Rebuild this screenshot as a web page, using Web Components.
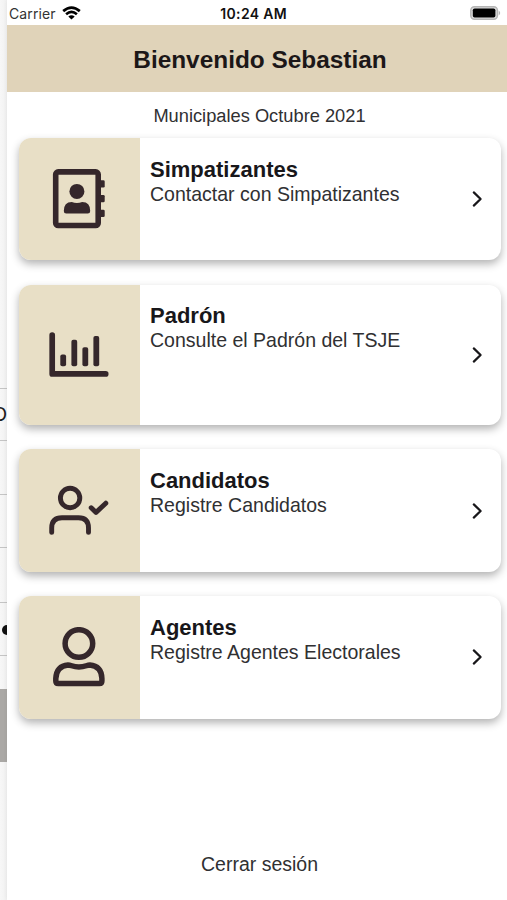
<!DOCTYPE html>
<html lang="es">
<head>
<meta charset="utf-8">
<title>Bienvenido</title>
<style>
html,body{margin:0;height:900px;overflow:hidden;background:#fff;color:#1c1b1d;font-family:"Liberation Sans",Arial,sans-serif}
</style>
</head>
<body>
<app-shell></app-shell>
<script>
function define(name, html) {
  const template = document.createElement('template');
  template.innerHTML = html;
  customElements.define(name, class extends HTMLElement {
    constructor() {
      super();
      this.attachShadow({mode: 'open'}).append(template.content.cloneNode(true));
    }
  });
}

define('previous-screen', `
<style>
:host{display:flex;flex-direction:column;height:900px;overflow:hidden;background:linear-gradient(90deg,#f7f7f7,#f1f1f1)}
.top{height:387.5px}
.row{box-sizing:border-box;border-top:1.5px solid #c4c4c4;display:flex;align-items:center;overflow:hidden}
.letter{justify-content:flex-end;font-size:19.6px;line-height:22px}
.dot{flex:none;width:10px;height:10px;border-radius:50%;background:#111;margin:2px 0 0 1.5px}
.button{height:73.5px;background:#aaa8a5}
</style>
<div class="top"></div>
<div class="row letter" style="height:52px">O</div>
<div class="row" style="height:54.5px"></div>
<div class="row" style="height:53px"></div>
<div class="row" style="height:54.5px"></div>
<div class="row" style="height:53.5px"><span class="dot"></span></div>
<div class="row" style="height:33.5px"></div>
<div class="button"></div>`);

define('status-bar', `
<style>
:host{display:grid;grid-template-columns:1fr auto 1fr;align-items:center;height:25.4px;box-sizing:border-box;padding:2px 6px 0 2px;font-family:Inter,sans-serif;font-size:14px;color:#111}
.left{display:flex;align-items:center;gap:6px;color:#333}
.carrier{letter-spacing:.1px}
.time{font-weight:600;font-size:14px;color:#111;letter-spacing:.35px;transform:translateX(-1.3px)}
.right{display:flex;justify-content:flex-end}
svg{display:block;margin-top:-1px}
</style>
<div class="left"><span class="carrier">Carrier</span>
<svg width="19" height="14" viewBox="0 0 19 14" fill="none" stroke="#000" stroke-width="2.7"><path d="M1.2 5.1Q9.5-2 17.8 5.1M4.1 8.2Q9.5 3.7 14.9 8.2"/><path d="M6.3 10.4Q9.5 7.9 12.7 10.4L9.5 13.6z" fill="#000" stroke="none"/></svg></div>
<div class="time">10:24 AM</div>
<div class="right"><svg width="31" height="14" viewBox="0 0 31 14"><rect x=".8" y=".8" width="26.6" height="12.4" rx="3.6" fill="#ddd" stroke="#b5b5b5" stroke-width="1.5"/><rect x="2.8" y="2.5" width="22.6" height="9" rx="1.8" fill="#000"/><path d="M28.7 4.6q3 2.4 0 4.8z" fill="#b5b5b5"/></svg></div>`);

define('page-header', `
<style>
:host{display:flex;align-items:center;justify-content:center;height:66.6px;box-sizing:border-box;padding:2px 0 0 6px;background:#e0d3b9}
h1{margin:0;font-size:24.4px;line-height:28px;font-weight:700;color:#1c1718}
</style><h1><slot></slot></h1>`);

define('menu-card', `
<style>
:host{display:flex;box-sizing:border-box;height:122.5px;border-radius:12px;background:#fff;box-shadow:0 4px 9px rgba(0,0,0,.3);overflow:hidden}
.icon{flex:none;width:121px;display:flex;align-items:center;justify-content:center;background:#e8dfc6}
.copy{flex:1;padding:18.8px 0 0 10px}
h2{margin:0;font-size:22px;line-height:25px;font-weight:700;color:#18171a}
p{margin:0;font-size:19.52px;line-height:24px;color:#303032;white-space:nowrap}
.arrow{flex:none;align-self:center;display:block;margin-right:17px}
</style>
<div class="icon"><slot name="icon"></slot></div>
<div class="copy"><h2><slot name="title"></slot></h2><p><slot></slot></p></div>
<svg class="arrow" width="14" height="18" viewBox="0 0 14 18" fill="none" stroke="#18171a" stroke-width="2.2" stroke-linecap="round" stroke-linejoin="round"><path d="M3.8 2.4 10.6 9l-6.8 6.6"/></svg>`);

define('main-screen', `
<style>
:host{display:flex;flex-direction:column;height:900px;background:#fff;box-shadow:0 0 4px rgba(0,0,0,.07)}
.subtitle{margin:0;height:46px;line-height:47px;text-align:center;padding-left:5px;font-size:18.28px;color:#303032}
.cards{display:flex;flex-direction:column;gap:24.2px;padding:0 6px 0 12px}
.tall{height:140.6px}
.logout{margin:131.8px 0 0;text-align:center;padding-left:5px;font-size:19.5px;line-height:28px;color:#303032}
svg{display:block;width:60px;height:60px;color:#35272b;margin-left:-1px}
</style>
<status-bar></status-bar>
<page-header>Bienvenido Sebastian</page-header>
<p class="subtitle">Municipales Octubre 2021</p>
<div class="cards">
<menu-card>
<svg slot="icon" viewBox="49.5 169 60 60" fill="currentColor"><rect x="56.2" y="171.9" width="42.5" height="53.6" rx="2.5" fill="none" stroke="currentColor" stroke-width="5.6"/><rect x="99" y="180.2" width="6.2" height="7.3" rx="1.3"/><rect x="99" y="195" width="6.2" height="7.3" rx="1.3"/><rect x="99" y="209.7" width="6.2" height="7.3" rx="1.3"/><circle cx="77.4" cy="191.4" r="7.5"/><path d="M64.3 211q0-9 8-9 5 1.8 10.4 0 8 0 8 9 0 2.5-2.4 2.5H66.7q-2.4 0-2.4-2.5z"/></svg>
<span slot="title">Simpatizantes</span>Contactar con Simpatizantes</menu-card>
<menu-card class="tall">
<svg slot="icon" viewBox="49.5 325 60 60" fill="currentColor"><path d="M52.7 335.2V373.9H106.2" fill="none" stroke="currentColor" stroke-width="5.7" stroke-linecap="round" stroke-linejoin="round"/><rect x="60.8" y="354.5" width="5.8" height="11.7" rx="1.9"/><rect x="71.9" y="339.8" width="5.8" height="26.4" rx="1.9"/><rect x="82.9" y="347.2" width="5.8" height="19" rx="1.9"/><rect x="93.9" y="336.1" width="5.8" height="30.1" rx="1.9"/></svg>
<span slot="title">Padrón</span>Consulte el Padrón del TSJE</menu-card>
<menu-card>
<svg slot="icon" viewBox="49.5 481 60 60" fill="none" stroke="currentColor" stroke-width="4.9" stroke-linecap="round" stroke-linejoin="round"><circle cx="70.6" cy="498" r="9.7"/><path d="M52.2 532.4V528Q52.2 517.8 62.5 517.8H79Q89 517.8 89 528V532.4M91.7 507.8l4.8 4.6 9.8-9.2"/></svg>
<span slot="title">Candidatos</span>Registre Candidatos</menu-card>
<menu-card>
<svg slot="icon" viewBox="49.5 627.5 60 60" fill="none" stroke="currentColor" stroke-width="5.5" stroke-linejoin="round"><circle cx="79.4" cy="644" r="13.8"/><path d="M56.3 680.5V679Q57 666.5 68.5 665.5C72 665.5 73 667.5 79.4 667.5S87 665.5 90.3 665.5Q102 666.5 102.4 679V681.5Q102.4 684 99.9 684H58.8Q56.3 684 56.3 681.5z"/></svg>
<span slot="title">Agentes</span>Registre Agentes Electorales</menu-card>
</div>
<p class="logout">Cerrar sesión</p>`);

define('app-shell', `
<style>
:host{display:grid;grid-template-columns:7px 500px;width:507px;height:900px;overflow:hidden}
main-screen{min-width:0}
</style>
<previous-screen></previous-screen><main-screen></main-screen>`);
</script>
</body>
</html>
